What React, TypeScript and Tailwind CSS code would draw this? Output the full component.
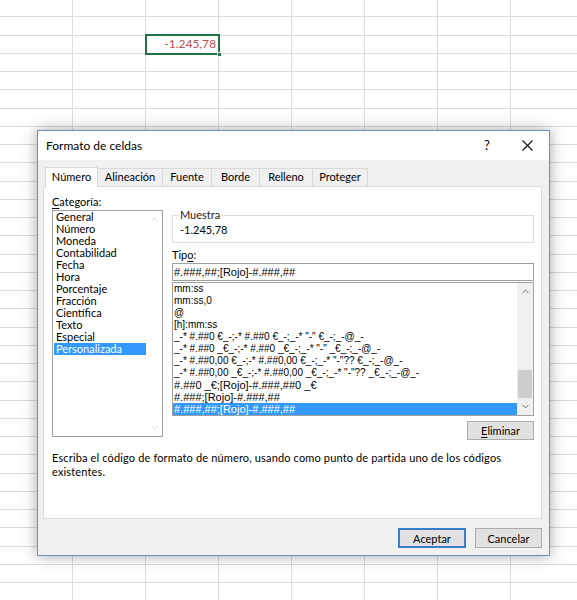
import React from 'react';
import { ChevronUp, ChevronDown } from 'lucide-react';

const ROWS = 34;
const COLS = 8;

const CATEGORIES = [
  'General',
  'Número',
  'Moneda',
  'Contabilidad',
  'Fecha',
  'Hora',
  'Porcentaje',
  'Fracción',
  'Científica',
  'Texto',
  'Especial',
  'Personalizada',
];

const TIPOS = [
  'mm:ss',
  'mm:ss,0',
  '@',
  '[h]:mm:ss',
  '_-* #.##0 €_-;-* #.##0 €_-;_-* "-" €_-;_-@_-',
  '_-* #.##0 _€_-;-* #.##0 _€_-;_-* "-" _€_-;_-@_-',
  '_-* #.##0,00 €_-;-* #.##0,00 €_-;_-* "-"?? €_-;_-@_-',
  '_-* #.##0,00 _€_-;-* #.##0,00 _€_-;_-* "-"?? _€_-;_-@_-',
  '#.##0 _€;[Rojo]-#.###,##0 _€',
  '#.###;[Rojo]-#.###,##',
  '#.###,##;[Rojo]-#.###,##',
];

const TABS = [
  { label: 'Número', w: 'w-[53px]', active: true },
  { label: 'Alineación', w: 'w-[65px]' },
  { label: 'Fuente', w: 'w-[49px]' },
  { label: 'Borde', w: 'w-[48px]' },
  { label: 'Relleno', w: 'w-[53px]' },
  { label: 'Proteger', w: 'w-[55px]' },
];

function SheetGrid() {
  return (
    <div className="flex flex-col mt-[-1px]">
      {Array.from({ length: ROWS }).map((_, r) => (
        <div key={r} className="flex h-[18.25px] shrink-0">
          {Array.from({ length: COLS }).map((_, c) => (
            <div
              key={c}
              className="w-[73px] shrink-0 border-r border-b border-[#dadcdd] flex items-center justify-end pr-[2px]"
            >
              {r === 2 && c === 2 && (
                <span className="text-[12px] text-[#c0504d] font-['Lato',sans-serif] leading-none">-1.245,78</span>
              )}
            </div>
          ))}
        </div>
      ))}
    </div>
  );
}

function Dialog() {
  return (
    <div className="absolute left-[37px] top-[130px] w-[513px] h-[426px] border border-[#6d8fbd] bg-[#f0f0f0] shadow-[0_0_14px_rgba(0,0,0,0.35)] flex flex-col font-['Lato',sans-serif] text-[11px] text-black">
      {/* title bar */}
      <div className="h-[29px] bg-white flex items-center shrink-0">
        <span className="pl-[8px] text-[12px]">Formato de celdas</span>
        <div className="ml-auto flex h-full">
          <div className="w-[36px] flex items-center justify-center text-[13px]">?</div>
          <div className="w-[44px] flex items-center justify-center">
            <svg width="11" height="11" viewBox="0 0 11 11">
              <path d="M0.5 0.5 L10.5 10.5 M10.5 0.5 L0.5 10.5" stroke="#111" strokeWidth="1.1" fill="none" />
            </svg>
          </div>
        </div>
      </div>

      {/* tabs */}
      <div className="flex items-end h-[19px] mt-[7px] ml-[7px] shrink-0">
        {TABS.map((t, i) => (
          <div
            key={t.label}
            className={
              t.active
                ? `${t.w} h-[20px] -mb-px relative z-10 bg-white border border-b-0 border-[#d9d9d9] flex items-center justify-center`
                : `${t.w} h-[18px] bg-[#f0f0f0] border-t border-r border-[#d9d9d9] flex items-center justify-center ${i === 0 ? 'border-l' : ''}`
            }
          >
            {t.label}
          </div>
        ))}
      </div>

      {/* panel */}
      <div className="ml-[5px] w-[499px] h-[333px] bg-white border border-[#d9d9d9] pt-[8px] pl-[8px] shrink-0">
        <div className="flex gap-[9px]">
          {/* categoria */}
          <div className="w-[111px] flex flex-col">
            <div className="h-[14px] leading-[14px]">
              <u className="underline-offset-2">C</u>ategoría:
            </div>
            <div className="mt-[1px] h-[227px] border border-[#a0a0a0] flex">
              <div className="flex-1 pl-[1px]">
                {CATEGORIES.map((c) => (
                  <div
                    key={c}
                    className={`h-[12px] leading-[12px] pl-[2px] ${c === 'Personalizada' ? 'bg-[#3399ff] text-white' : ''}`}
                  >
                    {c}
                  </div>
                ))}
              </div>
              <div className="w-[16px] flex flex-col justify-between items-center py-[3px]">
                <ChevronUp size={11} strokeWidth={1.5} color="#c4c4c4" />
                <ChevronDown size={11} strokeWidth={1.5} color="#c4c4c4" />
              </div>
            </div>
          </div>

          {/* right column */}
          <div className="w-[362px] flex flex-col">
            <fieldset className="mt-[14px] h-[34px] border border-[#dcdcdc] px-[6px]">
              <legend className="px-[1px] leading-[12px] text-[#222]">Muestra</legend>
              <div className="mt-[2px] pl-[1px] leading-[14px]">-1.245,78</div>
            </fieldset>

            <div className="mt-[6px] leading-[12px] h-[12px]">
              Tip<u className="underline-offset-2">o</u>:
            </div>
            <div className="mt-[2px] h-[18px] border border-[#a0a0a0] flex items-center pl-[1px] font-['Liberation_Sans',sans-serif] text-[11px]">
              #.###,##;[Rojo]-#.###,##
            </div>

            <div className="mt-[1px] h-[134px] border border-[#a0a0a0] flex font-['Liberation_Sans',sans-serif] text-[10px]">
              <div className="flex-1 overflow-hidden">
                {TIPOS.map((t, i) => (
                  <div
                    key={i}
                    className={`h-[12px] leading-[12px] pl-[1px] whitespace-pre ${i >= 8 ? 'text-[11px]' : ''} ${i === TIPOS.length - 1 ? 'bg-[#3399ff] text-white' : ''}`}
                  >
                    {t}
                  </div>
                ))}
              </div>
              <div className="w-[16px] bg-[#f0f0f0] flex flex-col">
                <div className="h-[17px] flex items-center justify-center">
                  <ChevronUp size={11} strokeWidth={2} color="#606060" />
                </div>
                <div className="flex-1 flex flex-col justify-end px-[1px]">
                  <div className="h-[28px] bg-[#cdcdcd]" />
                </div>
                <div className="h-[17px] flex items-center justify-center">
                  <ChevronDown size={11} strokeWidth={2} color="#606060" />
                </div>
              </div>
            </div>

            <button className="mt-[5px] self-end w-[67px] h-[19px] border border-[#adadad] bg-[#e1e1e1] leading-none">
              <u className="underline-offset-2">E</u>liminar
            </button>
          </div>
        </div>

        <p className="mt-[11px] w-[482px] leading-[14px] tracking-[0.15px]">
          Escriba el código de formato de número, usando como punto de partida uno de los códigos existentes.
        </p>
      </div>

      {/* buttons */}
      <div className="flex justify-end gap-[9px] pr-[7px] mt-[9px]">
        <button className="w-[68px] h-[20px] border-2 border-[#3a7dc9] bg-[#e1e1e1] leading-none">Aceptar</button>
        <button className="w-[67px] h-[20px] border border-[#adadad] bg-[#e1e1e1] leading-none">Cancelar</button>
      </div>
    </div>
  );
}

export default function App() {
  return (
    <div className="relative w-[577px] h-[600px] overflow-hidden bg-white">
      <SheetGrid />
      {/* selected cell */}
      <div className="absolute left-[145px] top-[34px] w-[75px] h-[21px] border-2 border-[#217346]">
        <div className="absolute right-[-4px] bottom-[-4px] w-[5px] h-[5px] bg-[#217346] border border-white" />
      </div>
      <Dialog />
    </div>
  );
}
